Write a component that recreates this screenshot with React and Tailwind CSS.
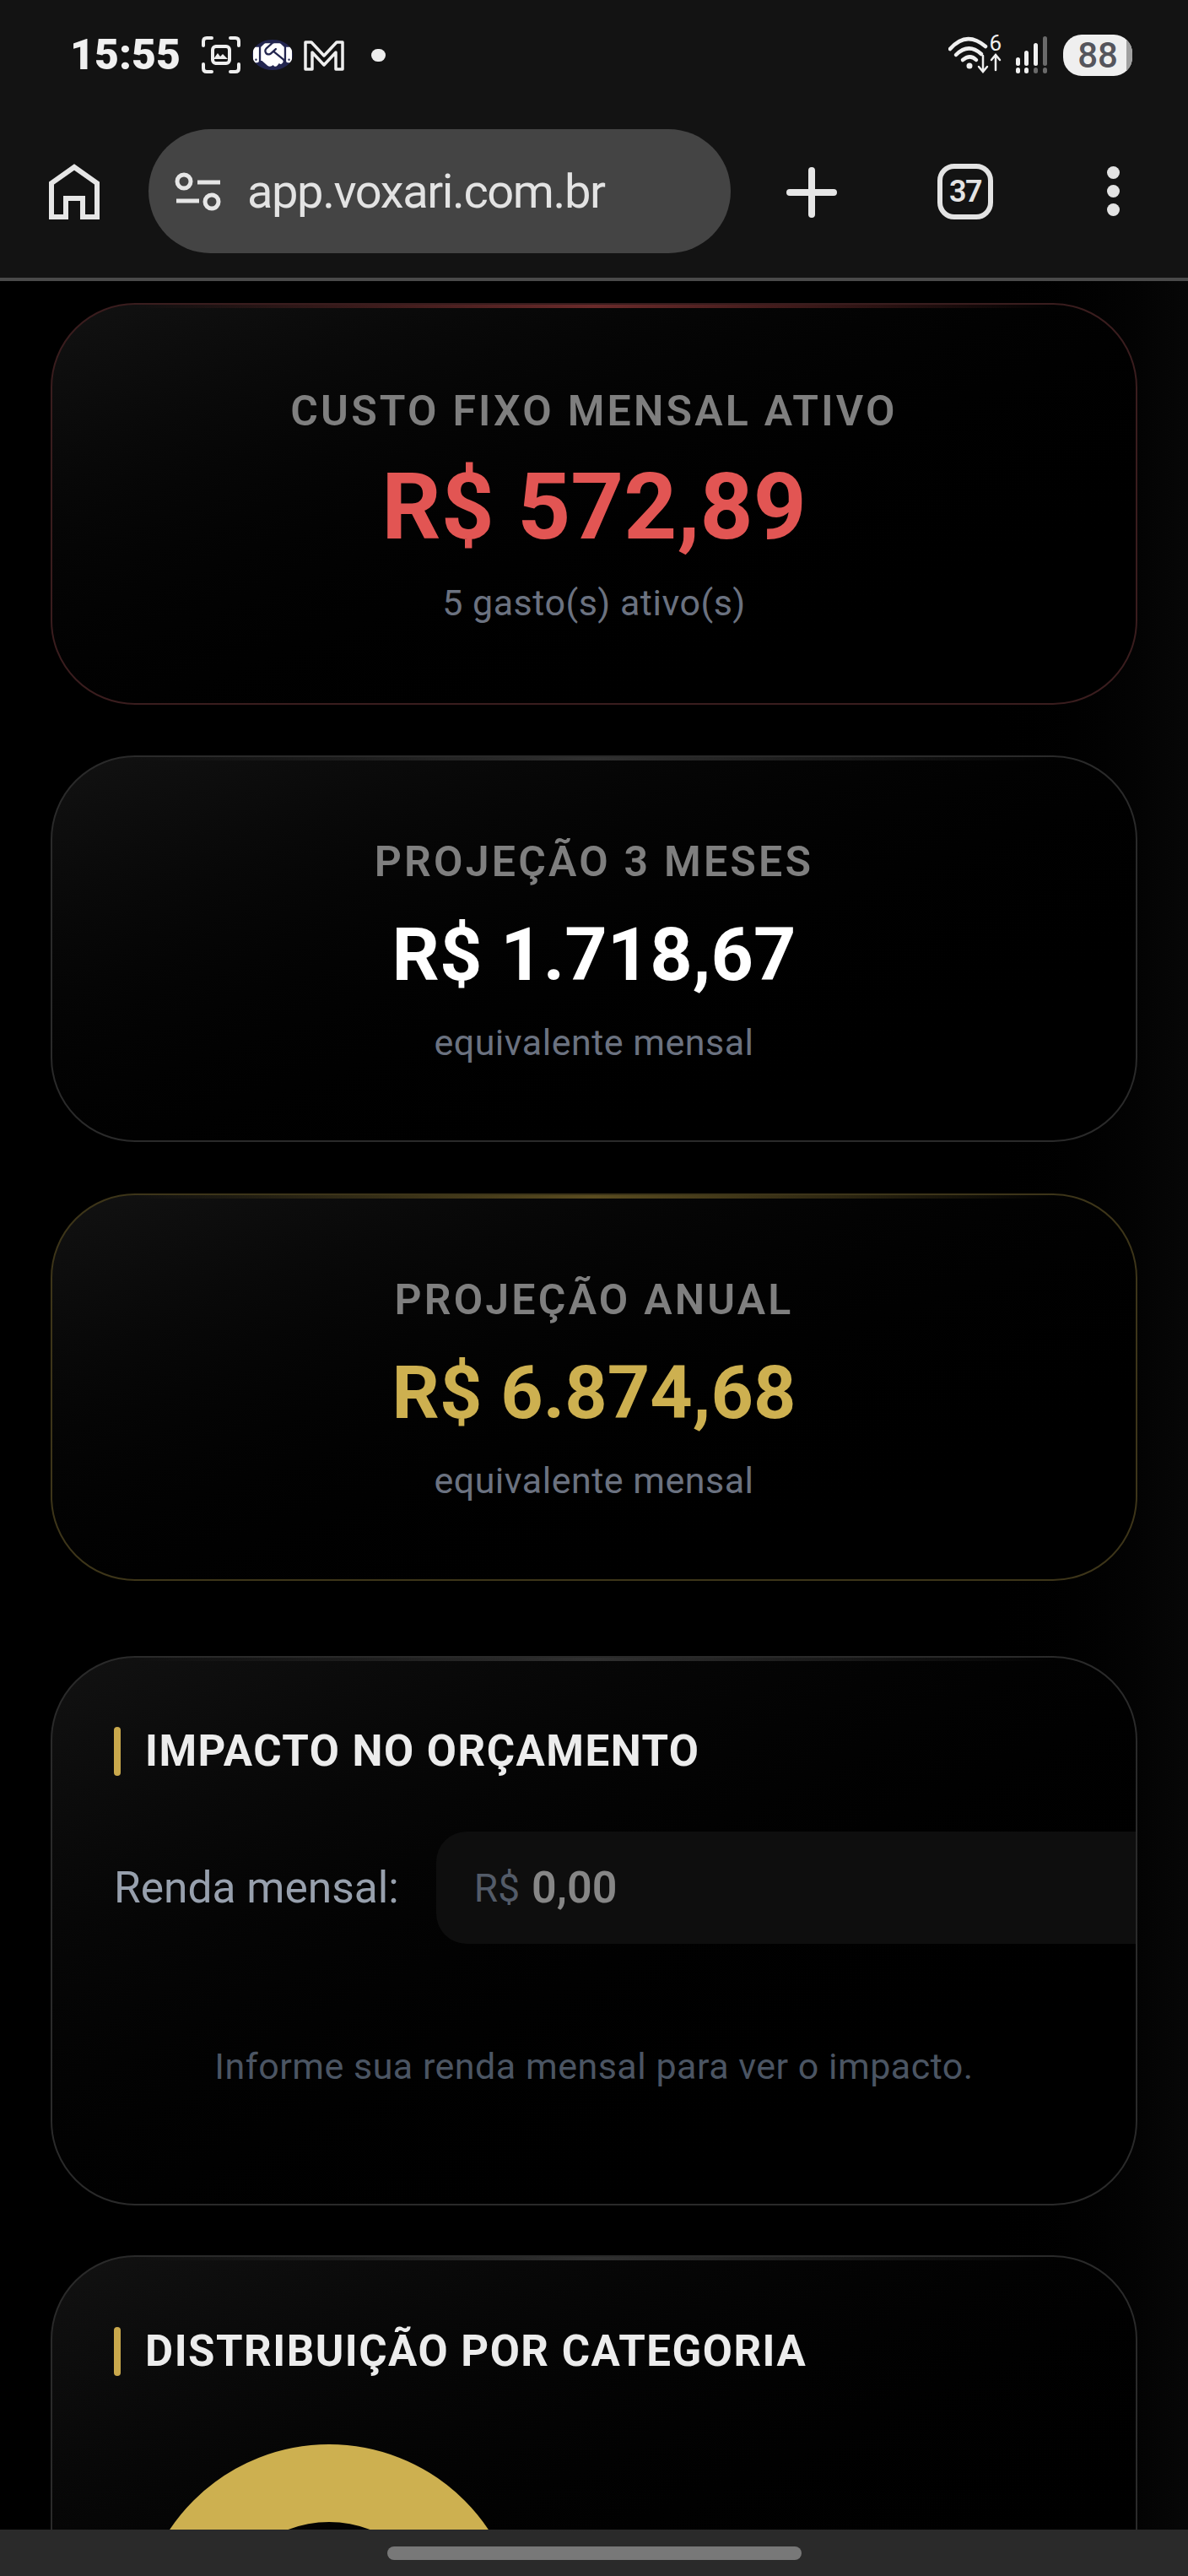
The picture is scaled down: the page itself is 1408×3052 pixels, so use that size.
import React from "react";
import { FaHandshake } from "react-icons/fa";

function ScreenshotIcon() {
  return (
    <svg width="48" height="46" viewBox="0 0 48 46" fill="none" stroke="#eeeeee" strokeWidth="4" strokeLinecap="round">
      <path d="M3 12V7q0-4 4-4h6M35 3h6q4 0 4 4v5M45 34v5q0 4-4 4h-6M13 43H7q-4 0-4-4v-5" />
      <rect x="14" y="13" width="20" height="20" rx="4" />
      <path d="M15 28l5-7 3 4 3-3 6 6z" fill="#eeeeee" stroke="none" />
    </svg>
  );
}

function Handshake() {
  return (
    <div className="w-[48px] h-[36px] rounded-[50%] bg-[#23264f] flex items-center justify-center overflow-hidden">
      <FaHandshake size={46} color="#ffffff" />
    </div>
  );
}

function MailIcon() {
  return (
    <svg width="48" height="37" viewBox="0 0 48 37" fill="none" stroke="#eeeeee" strokeWidth="3.5" strokeLinejoin="round">
      <path d="M2 3h7l15 16L39 3h7v32h-8V15L24 30 10 15v20H2z" />
    </svg>
  );
}

function Wifi() {
  return (
    <svg width="64" height="46" viewBox="0 0 64 46" fill="none" stroke="#f0f0f0" strokeLinecap="round">
      <path d="M2 16C16 0 30 1 44 13" strokeWidth="4.5" />
      <path d="M9 23c10-10 20-10 30-1" strokeWidth="4.5" />
      <path d="M17 29c6-5 11-5 16 0" strokeWidth="4.5" />
      <circle cx="25" cy="36" r="3.5" fill="#f0f0f0" stroke="none" />
      <path d="M41 24v18m-5-5l5 6 5-6" strokeWidth="2.5" />
      <path d="M56 41V24m-5 5l5-6 5 6" strokeWidth="2.5" />
    </svg>
  );
}

function Signal() {
  const tops = [
    [2, 25, 10, "#f0f0f0"],
    [12, 17, 18, "#f0f0f0"],
    [23, 8, 27, "#f0f0f0"],
    [34, 0, 35, "#6a6a6a"],
  ];
  return (
    <svg width="40" height="44" viewBox="0 0 40 44">
      {tops.map(([x, y, h, c]) => (
        <rect key={x} x={x} y={y} width="5" height={h} rx="2.5" fill={c} />
      ))}
      <rect x="2" y="37" width="5" height="7" rx="2.5" fill="#f0f0f0" />
      <rect x="12" y="37" width="5" height="7" rx="2.5" fill="#f0f0f0" />
      <rect x="23" y="37" width="5" height="7" rx="2.5" fill="#6a6a6a" />
      <rect x="34" y="37" width="5" height="7" rx="2.5" fill="#6a6a6a" />
    </svg>
  );
}

function HomeIcon() {
  return (
    <svg width="60" height="66" viewBox="0 0 60 66" fill="none" stroke="#e6e6e6" strokeWidth="6" strokeLinejoin="miter">
      <path d="M3 63V23L30 4l27 19v40H40V41H20v22z" />
    </svg>
  );
}

function TuneIcon() {
  return (
    <svg width="56" height="46" viewBox="0 0 56 46" fill="none" stroke="#e6e6e6" strokeWidth="5">
      <circle cx="11" cy="11" r="8" />
      <path d="M27 12h27M2 34h27" />
      <circle cx="44" cy="35" r="8" />
    </svg>
  );
}

function PlusIcon() {
  return (
    <svg width="60" height="60" viewBox="0 0 60 60" stroke="#e6e6e6" strokeWidth="8" strokeLinecap="round">
      <path d="M30 4v52M4 30h52" />
    </svg>
  );
}

function Header() {
  return (
    <div className="bg-[#131313] shrink-0">
      <div className="h-[130px] pl-[83px] pr-[66px] pt-[40px] flex items-start justify-between">
        <div className="flex items-center h-[50px] gap-[13px]">
          <span className="text-[50px] leading-[50px] font-black text-[#f0f0f0] mr-[11px]">15:55</span>
          <ScreenshotIcon />
          <Handshake />
          <MailIcon />
          <span className="w-[17px] h-[15px] rounded-full bg-[#eeeeee] ml-[19px]"></span>
        </div>
        <div className="flex items-center h-[50px] gap-[14px]">
          <div className="relative w-[64px] h-[46px]">
            <Wifi />
            <span className="absolute right-[1px] top-[-4px] text-[26px] leading-[26px] text-[#f0f0f0]">6</span>
          </div>
          <Signal />
          <div className="relative w-[82px] h-[49px] rounded-[22px] bg-[#efefef] overflow-hidden flex items-center justify-center ml-[4px]">
            <span className="text-[42px] leading-[49px] font-medium text-[#55555c]">88</span>
            <span className="absolute right-0 top-0 bottom-0 w-[7px] bg-[#a0a0a0]"></span>
          </div>
        </div>
      </div>
      <div className="h-[199px] pl-[58px] pr-[80px] pt-[23px] flex items-start">
        <div className="mt-[41px]"><HomeIcon /></div>
        <div className="ml-[58px] w-[690px] h-[147px] rounded-[74px] bg-[#444444] flex items-center pl-[31px] gap-[30px]">
          <TuneIcon />
          <span className="text-[56px] leading-[60px] text-[#e3e3e3] tracking-[-1.4px]">app.voxari.com.br</span>
        </div>
        <div className="ml-[66px] mt-[45px]"><PlusIcon /></div>
        <div className="ml-[119px] mt-[41px] w-[66px] h-[66px] rounded-[20px] border-[6px] border-[#e3e3e3] flex items-center justify-center">
          <span className="text-[36px] leading-[36px] font-semibold text-[#e3e3e3] tracking-[-1.5px]">37</span>
        </div>
        <div className="ml-[135px] mt-[44px] flex flex-col gap-[7px]">
          <span className="w-[15px] h-[15px] rounded-full bg-[#e3e3e3]"></span>
          <span className="w-[15px] h-[15px] rounded-full bg-[#e3e3e3]"></span>
          <span className="w-[15px] h-[15px] rounded-full bg-[#e3e3e3]"></span>
        </div>
      </div>
      <div className="h-[4px] bg-[#4a4a4a]"></div>
    </div>
  );
}

function StatCard({ label, value, sub, cardClass, lineClass, valueClass, labelGap, subGap, pad }) {
  return (
    <section className={`relative mx-[60px] rounded-[100px] border-2 bg-gradient-to-br from-[#121212] to-[#000000] to-85% overflow-hidden text-center ${cardClass}`}>
      <div className={`absolute left-[96px] right-[96px] top-0 h-[4px] bg-gradient-to-r from-transparent to-transparent ${lineClass}`}></div>
      <div className={pad}>
        <div className="text-[50px] leading-[56px] font-semibold tracking-[3.2px] text-[#7f7f7f]">{label}</div>
        <div className={`font-bold ${valueClass} ${labelGap}`}>{value}</div>
        <div className={`text-[43px] leading-[50px] tracking-[0.5px] text-[#6b7280] ${subGap}`}>{sub}</div>
      </div>
    </section>
  );
}

function SectionTitle({ children }) {
  return (
    <div className="flex items-center gap-[29px]">
      <span className="w-[8px] h-[58px] rounded-full bg-[#c9a84c]"></span>
      <h2 className="text-[51px] leading-[58px] font-bold text-[#ececec] tracking-[1.5px]">{children}</h2>
    </div>
  );
}

function Donut() {
  return (
    <svg width="460" height="460" viewBox="0 0 460 460" className="block ml-[25px] mt-[78px]">
      <circle cx="230" cy="230" r="181" fill="none" stroke="#cdb050" strokeWidth="92" />
    </svg>
  );
}

export default function App() {
  return (
    <div className="w-[1408px] h-[3052px] overflow-hidden flex flex-col bg-black font-['Roboto',sans-serif]">
      <Header />
      <main className="flex-1 min-h-0 overflow-hidden pt-[26px] bg-gradient-to-r from-[#000000] via-[#000000] via-80% to-[#070707]">
        <StatCard
          label="CUSTO FIXO MENSAL ATIVO"
          value="R$ 572,89"
          sub="5 gasto(s) ativo(s)"
          cardClass="h-[476px] border-[#3a1d1e]"
          lineClass="via-[#6a2a2a]"
          valueClass="text-[110px] leading-[120px] text-[#e25553]"
          labelGap="mt-[26px]"
          subGap="mt-[28px]"
          pad="pt-[98px]"
        />
        <StatCard
          label="PROJEÇÃO 3 MESES"
          value="R$ 1.718,67"
          sub="equivalente mensal"
          cardClass="h-[458px] mt-[60px] border-[#2a2a2a]"
          lineClass="via-[#303030]"
          valueClass="text-[88px] leading-[100px] text-white"
          labelGap="mt-[32px]"
          subGap="mt-[29px]"
          pad="pt-[96px]"
        />
        <StatCard
          label="PROJEÇÃO ANUAL"
          value="R$ 6.874,68"
          sub="equivalente mensal"
          cardClass="h-[459px] mt-[61px] border-[#3d3519]"
          lineClass="via-[#5a4c20]"
          valueClass="text-[88px] leading-[100px] text-[#cdb050]"
          labelGap="mt-[32px]"
          subGap="mt-[29px]"
          pad="pt-[96px]"
        />
        <section className="relative mt-[89px] mx-[60px] h-[651px] rounded-[100px] border-2 border-[#2a2a2a] bg-gradient-to-br from-[#121212] to-[#000000] to-85% overflow-hidden pl-[73px] pt-[82px]">
          <div className="absolute left-[96px] right-[96px] top-0 h-[4px] bg-gradient-to-r from-transparent via-[#303030] to-transparent"></div>
          <SectionTitle>IMPACTO NO ORÇAMENTO</SectionTitle>
          <div className="mt-[66px] flex items-center">
            <span className="text-[51.5px] leading-[60px] text-[#97a0ad]">Renda mensal:</span>
            <div className="ml-[44px] flex-1 h-[133px] rounded-l-[36px] bg-[#0e0e0e] flex items-center pl-[45px] gap-[14px]">
              <span className="text-[46px] leading-[60px] text-[#535b68]">R$</span>
              <span className="text-[52px] leading-[60px] font-semibold text-[#868686]">0,00</span>
            </div>
          </div>
          <p className="mt-[117px] -ml-[73px] text-center text-[43px] leading-[56px] tracking-[0.5px] text-[#4b5563]">Informe sua renda mensal para ver o impacto.</p>
        </section>
        <section className="relative mt-[59px] mx-[60px] h-[600px] rounded-[100px] border-2 border-[#2a2a2a] bg-gradient-to-br from-[#121212] to-[#000000] to-85% overflow-hidden pl-[73px] pt-[83px]">
          <div className="absolute left-[96px] right-[96px] top-0 h-[4px] bg-gradient-to-r from-transparent via-[#303030] to-transparent"></div>
          <SectionTitle>DISTRIBUIÇÃO POR CATEGORIA</SectionTitle>
          <Donut />
        </section>
      </main>
      <div className="h-[55px] shrink-0 bg-[#2a2a2a] flex justify-center pt-[20px] relative z-10">
        <div className="w-[491px] h-[16px] rounded-[8px] bg-[#787878]"></div>
      </div>
    </div>
  );
}
